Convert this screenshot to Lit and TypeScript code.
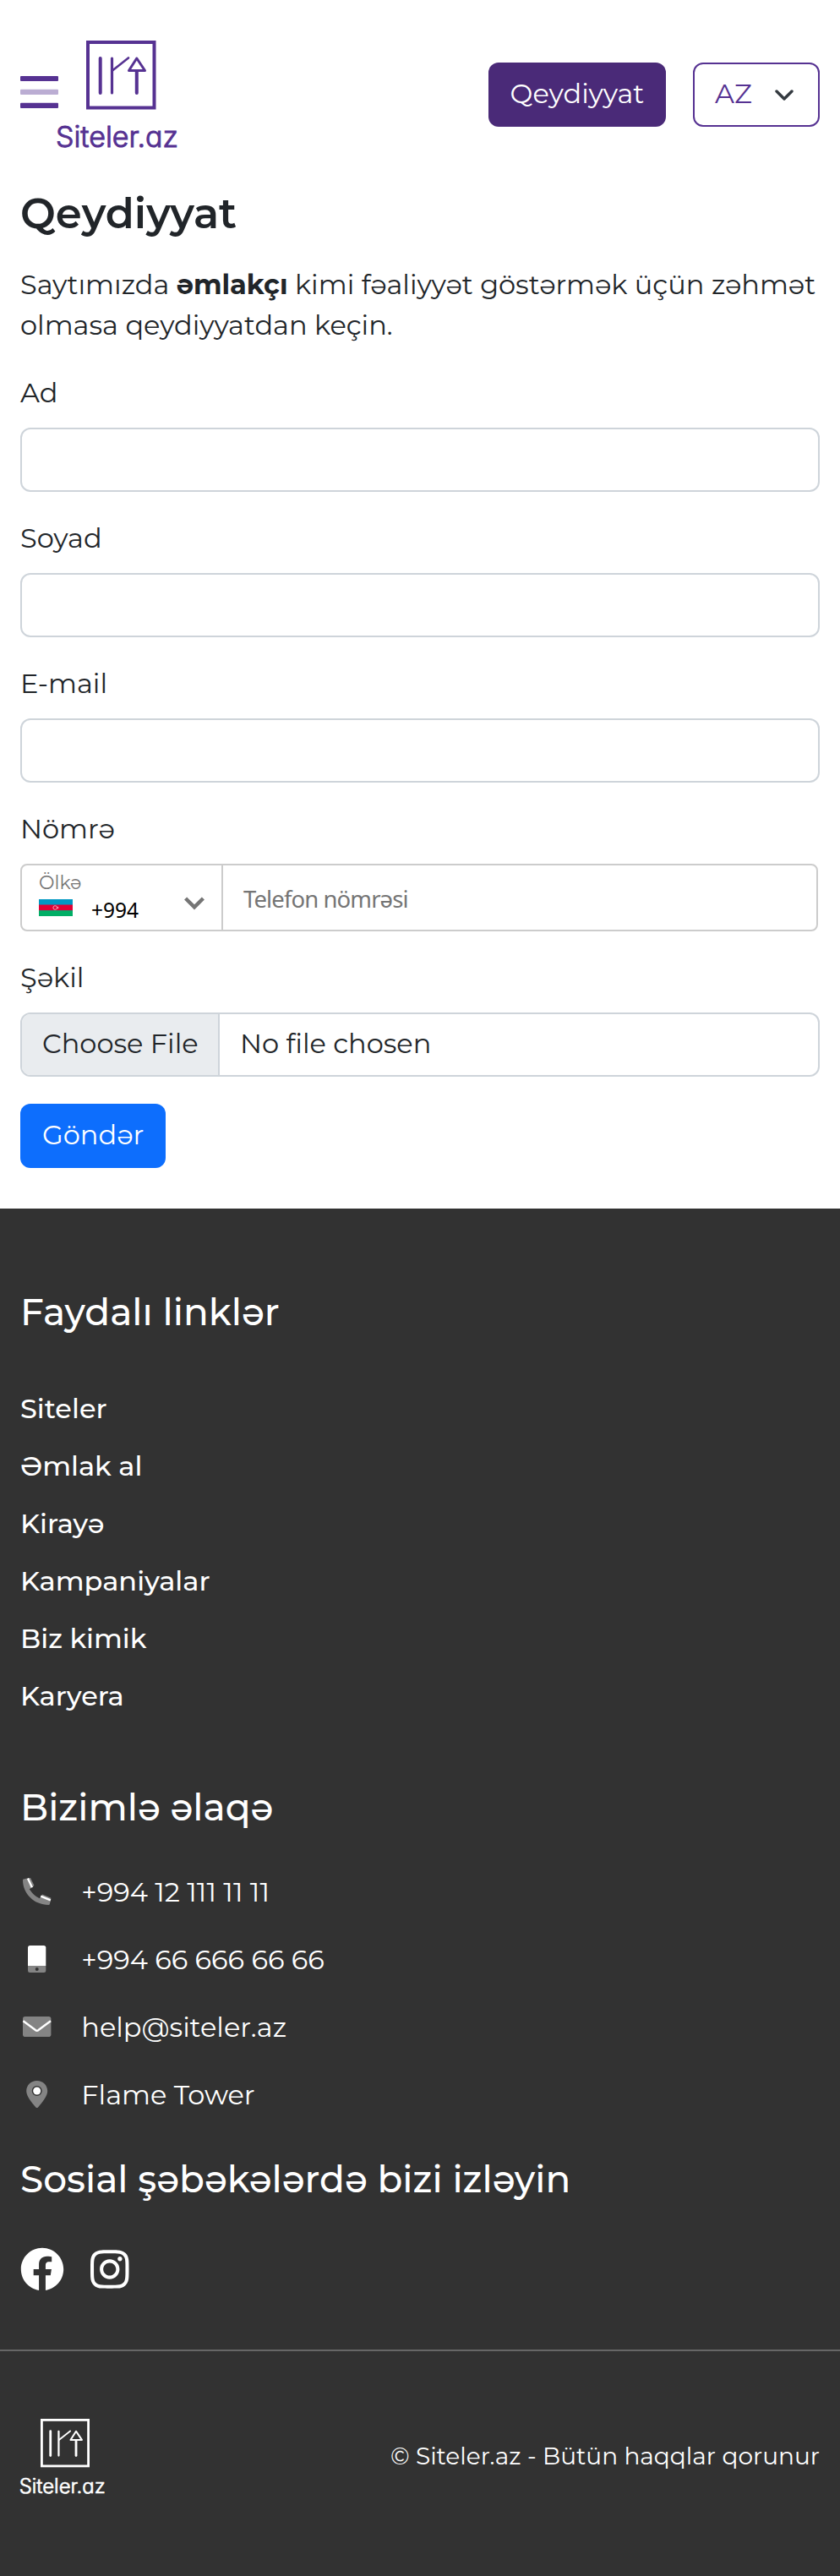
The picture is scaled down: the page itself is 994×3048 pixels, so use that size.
import { LitElement, html, css, svg } from 'lit';
import { customElement, property } from 'lit/decorators.js';

const fontStack = css`Montserrat, Inter, 'Open Sans', sans-serif`;

@customElement('site-logo')
class SiteLogo extends LitElement {
  static styles = css`
    :host { display: block; flex: none; }
    svg { display: block; width: 100%; height: 100%; overflow: visible; }
    .name {
      font: 300 34px Inter, 'Open Sans', sans-serif;
      font-feature-settings: 'cv11';
      fill: currentColor;
      stroke: currentColor;
      stroke-width: 1;
    }
  `;

  render() {
    return html`
      <svg viewBox="0 0 142 128" fill="none" stroke="currentColor">
        <rect x="36" y="2" width="78.5" height="77.5" stroke-width="4" />
        <path d="M50.7 21V62" stroke-width="4" stroke-linecap="round" />
        <path d="M64.5 21V62" stroke-width="3.2" stroke-linecap="round" />
        <path d="M65 35.5L84 20.5" stroke-width="2.6" stroke-linecap="round" />
        <path d="M93.8 21L84.5 35.5H103.5Z" stroke-width="3" stroke-linejoin="round" />
        <path d="M93.8 36V62" stroke-width="4" stroke-linecap="round" />
        <text class="name" x="-2" y="125.5" textLength="145">Siteler.az</text>
      </svg>
    `;
  }
}

const contactIcons = {
  phone: svg`
    <path class="soft" d="M0 2.6Q0 1.8.8 1.6L5 .5L10.3 11.7L7.8 13.2Q12.4 20.6 19.8 24.3L21.4 21.8L33 26.4L31.8 31Q31.6 32 30.5 32C13.5 32 0 19 0 2.6ZM6 .3L9 0L13.4 8.8L11.3 11.6ZM21.4 22L23.2 19.4L33.4 23.8L33 26.6Z" />
    <path class="edge" d="M5.9 .6L10.9 11.3M21.3 21.6L32.8 26.4" stroke-width="2.4" />`,
  mobile: svg`
    <path class="strong" d="M6 24V2.5Q6 0 8.5 0H24.8Q27.3 0 27.3 2.5V24Z" />
    <path class="soft" fill-rule="evenodd" d="M6 24H27.3V29.5Q27.3 32 24.8 32H8.5Q6 32 6 29.5ZM16.7 26A2 2 0 1 0 16.7 30A2 2 0 1 0 16.7 26Z" />`,
  mail: svg`
    <rect class="soft" x="0" y="4" width="33.4" height="24" rx="2.8" />
    <path class="edge" d="M.4 9.2L14.6 19.8Q16.7 21.6 18.8 19.8L33 9.2" stroke-width="2.4" />`,
  pin: svg`
    <path class="soft" fill-rule="evenodd" d="M16.7 0C23.8 0 29.2 5.4 29.2 12.2C29.2 18 22.8 26 18 31.4Q16.7 32.6 15.4 31.4C10.6 26 4.2 18 4.2 12.2C4.2 5.4 9.6 0 16.7 0ZM16.7 6A6 6 0 1 0 16.7 18A6 6 0 1 0 16.7 6Z" />
    <circle class="strong" cx="16.7" cy="12" r="4.5" />`,
};

@customElement('contact-row')
class ContactRow extends LitElement {
  @property() icon: keyof typeof contactIcons = 'phone';
  static styles = css`
    :host { display: flex; align-items: center; height: 48px; }
    svg { width: 34px; height: 32px; margin: 0 35px 0 3.3px; overflow: visible; flex: none; }
    .text { padding-top: 2px; line-height: 48px; }
    .soft { fill: #848484; }
    .strong { fill: #fff; }
    .edge { fill: none; stroke: #fff; }
  `;

  render() {
    return html`<svg viewBox="0 0 34 32">${contactIcons[this.icon]}</svg><div class="text"><slot></slot></div>`;
  }
}

@customElement('app-root')
class AppRoot extends LitElement {
  static styles = css`
    :host {
      display: block;
      background: #fff;
      color: #212529;
      font: 400 32px/48px ${fontStack};
    }
    * { box-sizing: border-box; }
    h1, h2, p { margin: 0; }
    header { display: flex; align-items: center; height: 224px; padding: 0 24px; }
    .burger { width: 45px; height: 44px; flex: none; fill: #563292; }
    .logo { width: 142px; height: 128px; margin-left: -1px; color: #563292; }
    .actions { display: flex; gap: 32px; margin-left: auto; }
    .btn {
      display: flex;
      align-items: center;
      height: 76px;
      padding: 0 26px 2px;
      border: 0;
      border-radius: 12px;
      font: 400 32px/48px ${fontStack};
      color: #fff;
      white-space: nowrap;
    }
    .register { width: 210px; background: #4a2a78; justify-content: center; padding: 0 0 2px; }
    .lang {
      width: 150px;
      border: 2px solid #563292;
      background: #fff;
      color: #563292;
      padding: 0 29px 2px 24px;
      justify-content: space-between;
    }
    .lang svg { width: 22px; height: 14px; margin-top: 2px; }
    main { padding: 0 24px 48px; }
    h1 { font-size: 49.7px; line-height: 62px; font-weight: 600; margin: -3px 0 30px; }
    .intro { margin-bottom: 31px; }
    b { font-weight: 700; }
    .field { margin-bottom: 30px; }
    .label { display: block; height: 66px; padding-top: 1px; }
    .input {
      display: flex;
      width: 100%;
      height: 76px;
      border: 2px solid #ced4da;
      border-radius: 12px;
      background: #fff;
      overflow: hidden;
    }
    .choose { width: 234px; padding: 11px 0 0 24px; background: #e9ecef; border-right: 2px solid #ced4da; }
    .chosen { padding: 11px 0 0 24px; }
    .phone {
      display: flex;
      width: 944px;
      height: 80px;
      border: 2px solid #ccc;
      border-radius: 8px;
      font-family: 'Noto Sans', 'Open Sans', sans-serif;
    }
    .country { display: flex; width: 238px; border-right: 2px solid #ccc; padding-left: 20px; }
    .country-main { width: 172px; }
    .country-title { font: 400 22px/24px ${fontStack}; color: #757575; padding-top: 9px; height: 36px; }
    .dial { display: flex; gap: 22px; color: #000; font-size: 24.5px; line-height: 30px; }
    .flag { width: 40px; height: 20px; margin-top: 4px; }
    .dial span { padding-top: 2px; }
    .caret { width: 24px; height: 16px; margin-top: 37px; }
    .number { padding: 18px 0 0 24px; font-size: 27.5px; line-height: 44px; letter-spacing: -0.9px; color: #757575; }
    .send { margin-top: 32px; background: #0d6efd; width: 172px; }
    .last { margin-bottom: 0; }

    footer { background: #323232; color: #fff; }
    .top { padding: 96px 24px 69px; }
    h2 { font-size: 43.8px; line-height: 53px; font-weight: 500; }
    .links { display: flex; flex-direction: column; gap: 20px; margin: 64px 0 81px; font-weight: 500; }
    .contacts { display: flex; flex-direction: column; gap: 32px; margin: 49px 0 50px; }
    .social { display: flex; gap: 31px; margin-top: 54px; }
    .social svg { height: 52px; fill: #fff; }
    .fb { width: 52px; }
    .ig { width: 45.5px; }
    .bottom {
      display: flex;
      justify-content: space-between;
      height: 268px;
      border-top: 2px solid #676767;
      padding: 80px 24px 0;
    }
    .bottom-logo { width: 100px; height: 90px; color: #fff; }
    .copy { font-size: 28px; line-height: 42px; padding-top: 23px; }
  `;

  private field(label: string) {
    return html`<div class="field"><span class="label">${label}</span><div class="input"></div></div>`;
  }

  render() {
    return html`
      <header>
        <svg class="burger" viewBox="0 0 45 44">
          <rect width="45" height="6" rx="1" />
          <rect y="15.8" width="45" height="6.2" rx="1" opacity="0.4" />
          <rect y="31.7" width="45" height="6.3" rx="1" />
        </svg>
        <site-logo class="logo"></site-logo>
        <div class="actions">
          <button class="btn register">Qeydiyyat</button>
          <div class="btn lang">
            AZ
            <svg viewBox="0 0 22 14" fill="none" stroke="#343a40" stroke-width="3.4" stroke-linecap="round" stroke-linejoin="round">
              <path d="M2 3L11 12L20 3" />
            </svg>
          </div>
        </div>
      </header>
      <main>
        <h1>Qeydiyyat</h1>
        <p class="intro">Saytımızda <b>əmlakçı</b> kimi fəaliyyət göstərmək üçün zəhmət olmasa qeydiyyatdan keçin.</p>
        ${['Ad', 'Soyad', 'E-mail'].map((label) => this.field(label))}
        <div class="field">
          <span class="label">Nömrə</span>
          <div class="phone">
            <div class="country">
              <div class="country-main">
                <div class="country-title">Ölkə</div>
                <div class="dial">
                  <svg class="flag" viewBox="0 0 40 20">
                    <rect width="40" height="20" fill="#0098c3" />
                    <rect y="6.5" width="40" height="7" fill="#e00034" />
                    <rect y="13.3" width="40" height="6.7" fill="#00ae65" />
                    <circle cx="19.2" cy="10" r="2.3" fill="none" stroke="#f3a3b5" stroke-width="1" />
                    <circle cx="22.2" cy="10" r="1.2" fill="#f0899f" />
                  </svg>
                  <span>+994</span>
                </div>
              </div>
              <svg class="caret" viewBox="0 0 24 16" fill="none" stroke="#757575" stroke-width="4.4">
                <path d="M1.6 2L12 12.4L22.4 2" />
              </svg>
            </div>
            <div class="number">Telefon nömrəsi</div>
          </div>
        </div>
        <div class="field last">
          <span class="label">Şəkil</span>
          <div class="input">
            <div class="choose">Choose File</div>
            <div class="chosen">No file chosen</div>
          </div>
        </div>
        <button class="btn send">Göndər</button>
      </main>
      <footer>
        <div class="top">
          <h2>Faydalı linklər</h2>
          <nav class="links">
            ${['Siteler', 'Əmlak al', 'Kirayə', 'Kampaniyalar', 'Biz kimik', 'Karyera'].map((l) => html`<a>${l}</a>`)}
          </nav>
          <h2>Bizimlə əlaqə</h2>
          <div class="contacts">
            <contact-row icon="phone">+994 12 111 11 11</contact-row>
            <contact-row icon="mobile">+994 66 666 66 66</contact-row>
            <contact-row icon="mail">help@siteler.az</contact-row>
            <contact-row icon="pin">Flame Tower</contact-row>
          </div>
          <h2>Sosial şəbəkələrdə bizi izləyin</h2>
          <div class="social">
            <svg class="fb" viewBox="0 0 512 512"><path d="M504 256C504 119 393 8 256 8S8 119 8 256c0 123.78 90.69 226.38 209.25 245V327.69h-63V256h63v-54.64c0-62.15 37-96.48 93.67-96.48 27.14 0 55.52 4.84 55.52 4.84v61h-31.28c-30.8 0-40.41 19.12-40.41 38.73V256h68.78l-11 71.69h-57.78V501C413.31 482.38 504 379.78 504 256z" /></svg>
            <svg class="ig" viewBox="0 0 448 512"><path d="M224.1 141c-63.6 0-114.9 51.3-114.9 114.9s51.3 114.9 114.9 114.9S339 319.5 339 255.9 287.7 141 224.1 141zm0 189.6c-41.1 0-74.7-33.5-74.7-74.7s33.5-74.7 74.7-74.7 74.7 33.5 74.7 74.7-33.6 74.7-74.7 74.7zm146.4-194.3c0 14.9-12 26.8-26.8 26.8-14.9 0-26.8-12-26.8-26.8s12-26.8 26.8-26.8 26.8 12 26.8 26.8zm76.1 27.2c-1.7-35.9-9.9-67.7-36.2-93.9-26.2-26.2-58-34.4-93.9-36.2-37-2.1-147.9-2.1-184.9 0-35.8 1.7-67.6 9.9-93.9 36.1s-34.4 58-36.2 93.9c-2.1 37-2.1 147.9 0 184.9 1.7 35.9 9.9 67.7 36.2 93.9s58 34.4 93.9 36.2c37 2.1 147.9 2.1 184.9 0 35.9-1.7 67.7-9.9 93.9-36.2 26.2-26.2 34.4-58 36.2-93.9 2.1-37 2.1-147.8 0-184.8zM398.8 388c-7.8 19.6-22.9 34.7-42.6 42.6-29.5 11.7-99.5 9-132.1 9s-102.7 2.6-132.1-9c-19.6-7.8-34.7-22.9-42.6-42.6-11.7-29.5-9-99.5-9-132.1s-2.6-102.7 9-132.1c7.8-19.6 22.9-34.7 42.6-42.6 29.5-11.7 99.5-9 132.1-9s102.7-2.6 132.1 9c19.6 7.8 34.7 22.9 42.6 42.6 11.7 29.5 9 99.5 9 132.1s2.7 102.7-9 132.1z" /></svg>
          </div>
        </div>
        <div class="bottom">
          <site-logo class="bottom-logo"></site-logo>
          <div class="copy">© Siteler.az - Bütün haqqlar qorunur</div>
        </div>
      </footer>
    `;
  }
}
